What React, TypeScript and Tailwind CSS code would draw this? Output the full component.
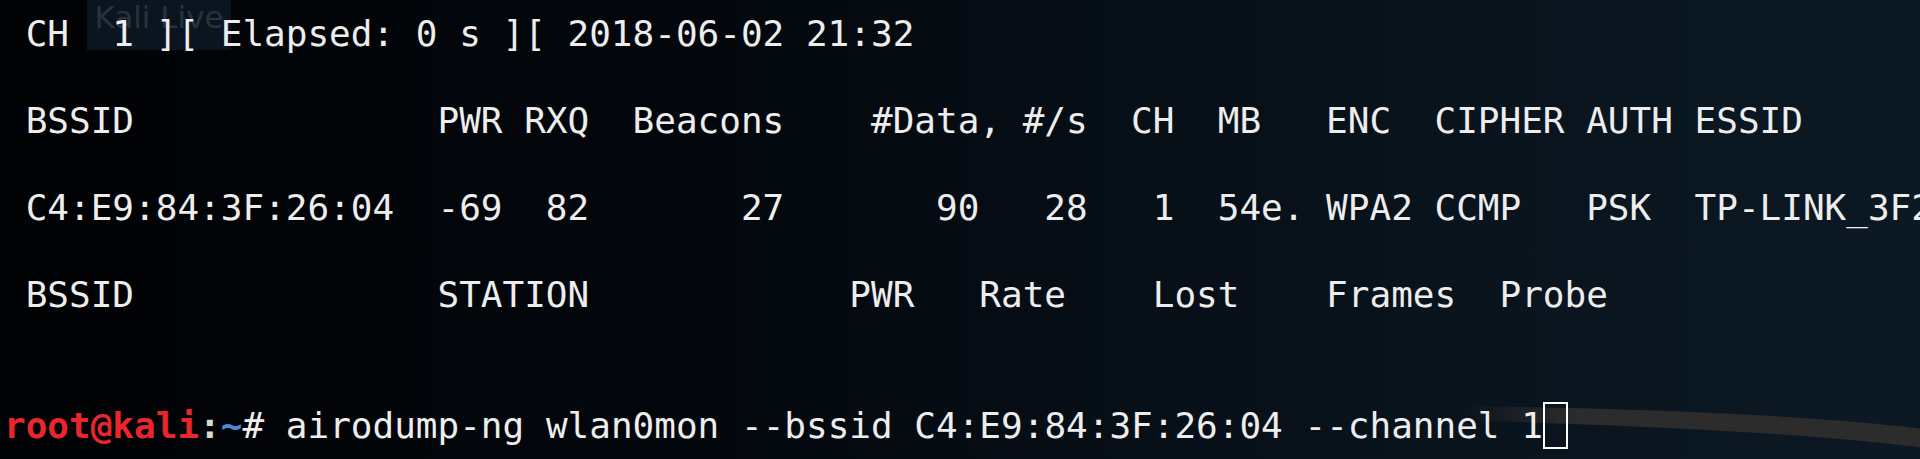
import React from 'react'

// airodump-ng output, one string per terminal row ('' = blank row)
const rows = [
  ' CH  1 ][ Elapsed: 0 s ][ 2018-06-02 21:32',
  '',
  ' BSSID              PWR RXQ  Beacons    #Data, #/s  CH  MB   ENC  CIPHER AUTH ESSID',
  '',
  ' C4:E9:84:3F:26:04  -69  82       27       90   28   1  54e. WPA2 CCMP   PSK  TP-LINK_3F2604',
  '',
  ' BSSID              STATION            PWR   Rate    Lost    Frames  Probe',
  '',
  '',
]

export default function App() {
  return (
    <div className="relative h-[459px] w-[1920px] overflow-hidden bg-[linear-gradient(90deg,#010204_0%,#03070c_35%,#08121b_70%,#0c1924_100%)]">
      {/* wallpaper swoosh, bottom right */}
      <svg className="absolute inset-0" width="1920" height="459" viewBox="0 0 1920 459">
        <defs>
          <linearGradient id="swoosh" x1="1460" y1="0" x2="1580" y2="0" gradientUnits="userSpaceOnUse">
            <stop offset="0" stopColor="#2c2c2c" stopOpacity="0" />
            <stop offset="1" stopColor="#2c2c2c" stopOpacity="1" />
          </linearGradient>
        </defs>
        <path
          d="M1460,406 C1620,408 1800,414 1925,429 L1925,448 C1800,432 1640,426 1460,420 Z"
          fill="url(#swoosh)"
        />
      </svg>

      {/* faded "Kali Live" label behind the first row */}
      <div className="absolute left-[87px] top-0 flex h-[50px] w-[144px] items-start justify-center overflow-hidden bg-[#0b151f]">
        <span className="-mt-[6px] font-['DejaVu_Sans',sans-serif] text-[31px] text-[#27323e]">Kali Live</span>
      </div>

      <div className="relative pl-[4px] pt-[12px] font-['DejaVu_Sans_Mono','Liberation_Mono',monospace] text-[36px] leading-[43.5px] text-[#ededed]">
        {rows.map((row, i) => (
          <div key={i} className="h-[43.5px] whitespace-pre">
            {row}
          </div>
        ))}
        <div className="flex h-[43.5px] items-start whitespace-pre">
          <span className="font-bold text-[#e8262b]">root@kali</span>
          <span className="font-bold text-[#d8d8d8]">:</span>
          <span className="font-bold text-[#4f88cf]">~</span>
          <span>{'# airodump-ng wlan0mon --bssid C4:E9:84:3F:26:04 --channel 1'}</span>
          <span className="-mt-[2px] inline-block h-[47px] w-[25px] border-[2.5px] border-white" />
        </div>
      </div>
    </div>
  )
}
